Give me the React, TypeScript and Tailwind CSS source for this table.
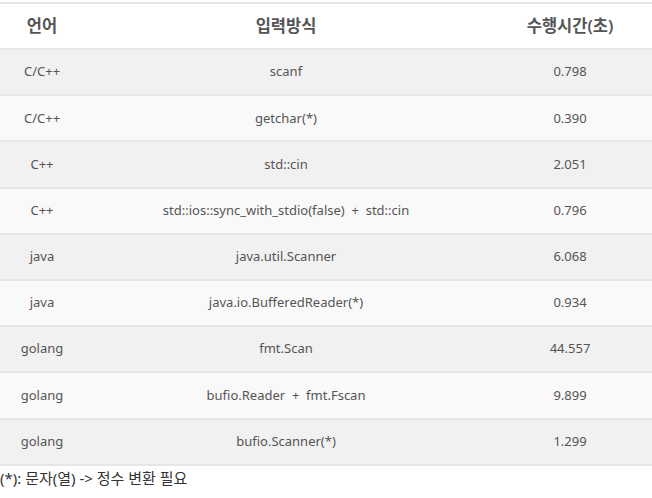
const rows = [
  ["C/C++", "scanf", "0.798"],
  ["C/C++", "getchar(*)", "0.390"],
  ["C++", "std::cin", "2.051"],
  ["C++", "std::ios::sync_with_stdio(false) + std::cin", "0.796"],
  ["java", "java.util.Scanner", "6.068"],
  ["java", "java.io.BufferedReader(*)", "0.934"],
  ["golang", "fmt.Scan", "44.557"],
  ["golang", "bufio.Reader + fmt.Fscan", "9.899"],
  ["golang", "bufio.Scanner(*)", "1.299"],
];

export default function App() {
  return (
    <div
      className="w-[652px] h-[498px] bg-white pt-[2px]"
      style={{ fontFamily: '"Noto Sans", "Noto Sans CJK KR", sans-serif' }}
    >
      <table className="w-full border-collapse table-fixed">
        <colgroup>
          <col className="w-[84px]" />
          <col className="w-[404px]" />
          <col />
        </colgroup>
        <thead>
          <tr className="h-[46px] border-t-2 border-b-2 border-[#e6e6e6]">
            <th className="text-[16.5px] font-semibold text-[#555] text-center">
              언어
            </th>
            <th className="text-[16.5px] font-semibold text-[#555] text-center">
              입력방식
            </th>
            <th className="text-[16.5px] font-semibold text-[#555] text-center">
              수행시간(초)
            </th>
          </tr>
        </thead>
        <tbody>
          {rows.map((row, index) => (
            <tr
              key={index}
              className={
                index % 2 === 0
                  ? "h-[46.2px] bg-[#f1f1f1] border-b-2 border-[#e6e6e6]"
                  : "h-[46.2px] bg-[#f9f9f9] border-b-2 border-[#e6e6e6]"
              }
            >
              <td className="text-[13px] text-[#555] text-center">{row[0]}</td>
              <td className="text-[13px] text-[#555] text-center whitespace-pre">
                {row[1].replace(" + ", "  +  ")}
              </td>
              <td className="text-[13px] text-[#555] text-center">{row[2]}</td>
            </tr>
          ))}
        </tbody>
      </table>
      <p className="mt-[2px] text-[15px] text-[#333] leading-[20px]">
        (*): 문자(열) -&gt; 정수 변환 필요
      </p>
    </div>
  );
}
